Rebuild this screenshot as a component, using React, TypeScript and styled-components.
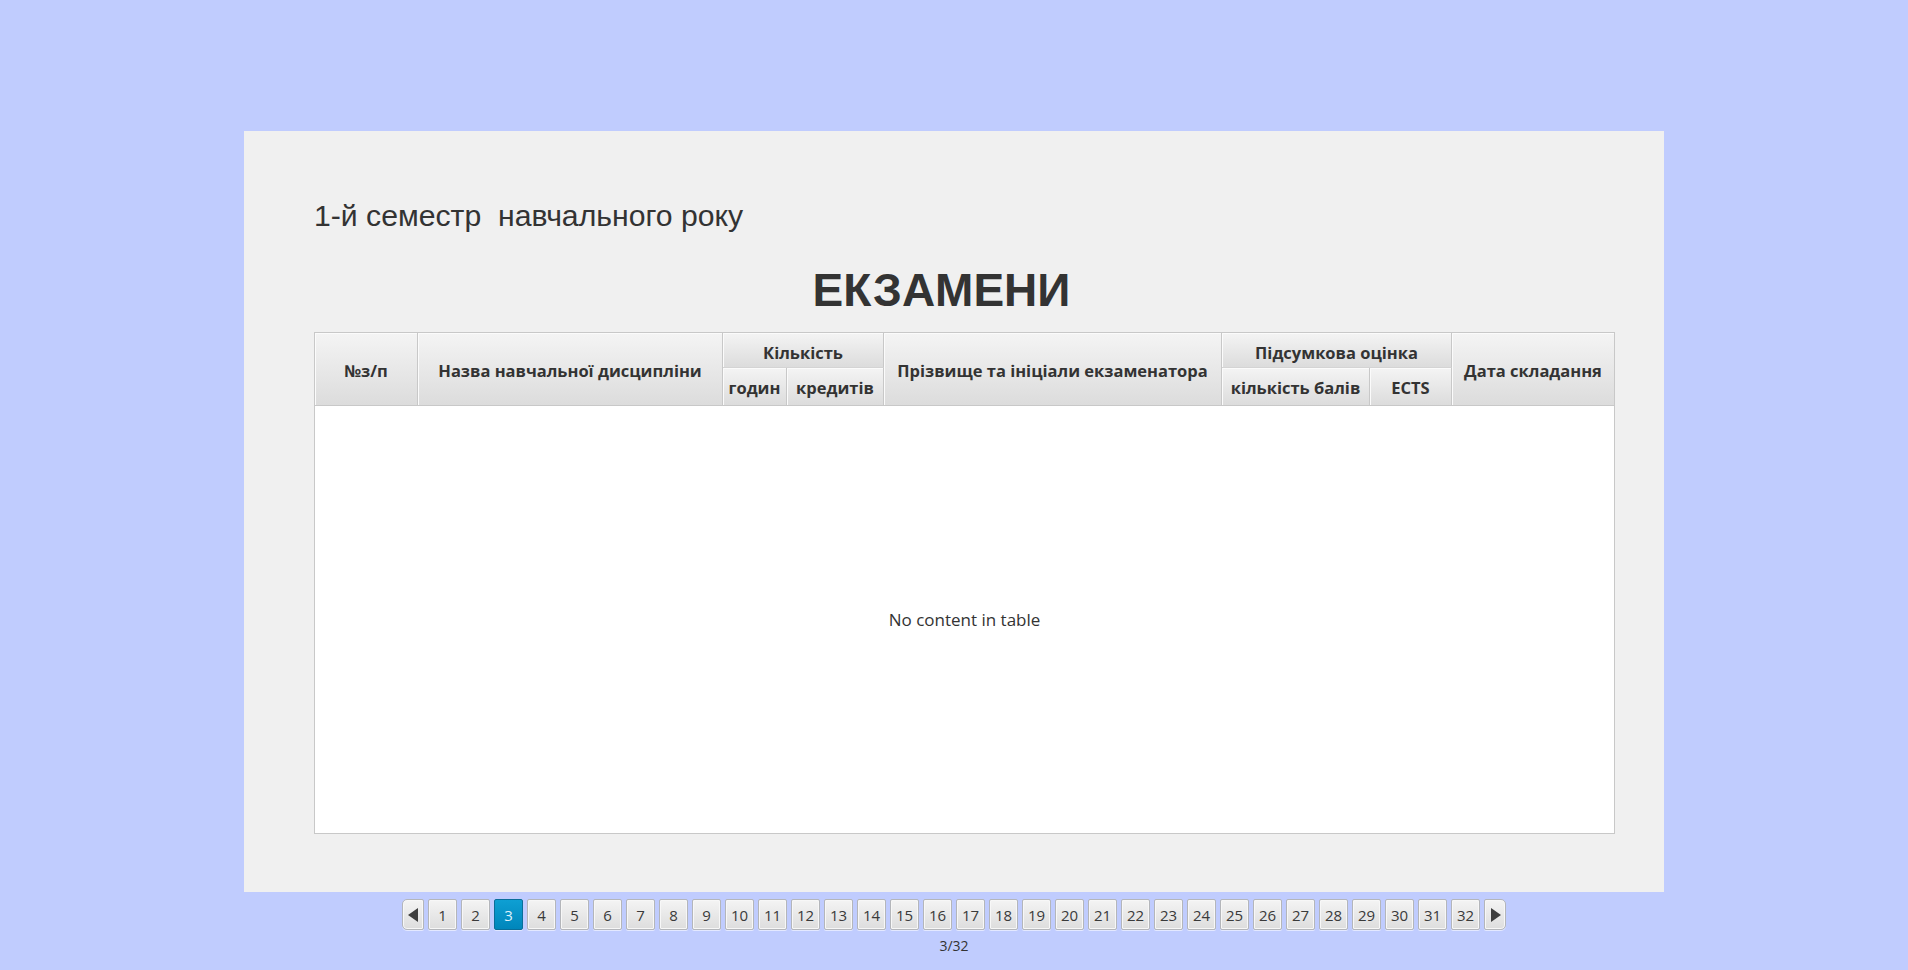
import React from "react";
import styled, { createGlobalStyle } from "styled-components";

const Global = createGlobalStyle`
  html, body { margin: 0; padding: 0; }
  body {
    background: #c0ccfe;
    font-family: "Open Sans", "Noto Sans", sans-serif;
    color: #333;
  }
`;

const Page = styled.div`
  width: 1908px;
  min-height: 970px;
  padding-top: 131px;
  box-sizing: border-box;
  display: flex;
  flex-direction: column;
  align-items: center;
`;

const Panel = styled.section`
  width: 1420px;
  box-sizing: border-box;
  background: #f0f0f0;
  padding: 70px 49px 58px 70px;
  display: flex;
  flex-direction: column;
`;

const Subtitle = styled.div`
  font-family: "Liberation Sans", Arial, sans-serif;
  font-size: 30.2px;
  line-height: 30px;
  color: #333;
  white-space: pre;
`;

const Title = styled.h1`
  margin: 36px 0 19px;
  padding-right: 46px;
  font-family: "Liberation Sans", Arial, sans-serif;
  font-weight: 700;
  font-size: 46px;
  line-height: 46px;
  text-align: center;
  color: #333;
`;

const Table = styled.div`
  border: 1px solid #c8c8c8;
  background: #fff;
  display: flex;
  flex-direction: column;
`;

const Header = styled.div`
  display: grid;
  grid-template-columns: 103px 305px 64px 97px 338px 148px 82px 162px;
  grid-template-rows: 35px 37px;
  border-bottom: 1px solid #c8c8c8;
`;

const HeadCell = styled.div<{ $col: string; $row: string; $last?: boolean }>`
  grid-column: ${(p) => p.$col};
  grid-row: ${(p) => p.$row};
  display: flex;
  align-items: center;
  justify-content: center;
  padding-top: ${(p) => (p.$row === "1" ? "4px" : "2px")};
  background: linear-gradient(#f4f4f4, #dcdcdc);
  box-shadow: inset 1px 1px 0 #fbfbfb;
  border-right: ${(p) => (p.$last ? "none" : "1px solid #c8c8c8")};
  border-bottom: ${(p) => (p.$row === "1" ? "1px solid #d4d4d4" : "none")};
  font-weight: 700;
  font-size: 16.5px;
  color: #333;
  white-space: nowrap;
  box-sizing: border-box;
`;

const Body = styled.div`
  height: 427px;
  display: flex;
  align-items: center;
  justify-content: center;
  font-size: 17px;
  color: #333;
`;

const Pager = styled.div`
  margin-top: 7px;
  display: flex;
  flex-direction: column;
  align-items: center;
`;

const PagerRow = styled.div`
  display: flex;
  gap: 4px;
`;

const PageButton = styled.button<{ $active?: boolean }>`
  width: 29px;
  height: 31px;
  padding: 0;
  box-sizing: border-box;
  border: 1px solid ${(p) => (p.$active ? "#0a6e9a" : "#b4b6ba")};
  border-radius: 2px;
  background: ${(p) =>
    p.$active
      ? "linear-gradient(#0e9fd3, #0086bb)"
      : "linear-gradient(#f4f4f4, #dddddd)"};
  box-shadow: ${(p) =>
    p.$active
      ? "0 1px 0 rgba(255,255,255,0.5)"
      : "inset 0 0 0 1px #f7f7f7, 0 1px 0 rgba(255,255,255,0.55)"};
  font-family: "Open Sans", "Noto Sans", sans-serif;
  font-size: 15px;
  color: ${(p) => (p.$active ? "#dff1fb" : "#3a3a3a")};
  display: flex;
  align-items: center;
  justify-content: center;
`;

const ArrowButton = styled.button<{ $side: "left" | "right" }>`
  width: 22px;
  height: 31px;
  padding: 0;
  box-sizing: border-box;
  border: 1px solid #b4b6ba;
  border-radius: ${(p) => (p.$side === "left" ? "5px 2px 2px 5px" : "2px 5px 5px 2px")};
  background: linear-gradient(#f4f4f4, #dddddd);
  box-shadow: inset 0 0 0 1px #f7f7f7, 0 1px 0 rgba(255,255,255,0.55);
  display: flex;
  align-items: center;
  justify-content: center;
`;

const PageInfo = styled.div`
  margin-top: 7px;
  font-size: 14px;
  line-height: 18px;
  color: #333;
`;

const Arrow = ({ dir }: { dir: "left" | "right" }) => (
  <svg width="11" height="14" viewBox="0 0 11 14">
    {dir === "left" ? (
      <polygon points="10,0 10,14 0,7" fill="#3d3d3d" />
    ) : (
      <polygon points="1,0 1,14 11,7" fill="#3d3d3d" />
    )}
  </svg>
);

export default function App() {
  const pages = Array.from({ length: 32 }, (_, i) => i + 1);
  return (
    <>
      <Global />
      <Page>
        <Panel>
          <Subtitle>{"1-й семестр  навчального року"}</Subtitle>
          <Title>ЕКЗАМЕНИ</Title>
          <Table>
            <Header>
              <HeadCell $col="1" $row="1 / 3">№з/п</HeadCell>
              <HeadCell $col="2" $row="1 / 3">Назва навчальної дисципліни</HeadCell>
              <HeadCell $col="3 / 5" $row="1">Кількість</HeadCell>
              <HeadCell $col="3" $row="2">годин</HeadCell>
              <HeadCell $col="4" $row="2">кредитів</HeadCell>
              <HeadCell $col="5" $row="1 / 3">Прізвище та ініціали екзаменатора</HeadCell>
              <HeadCell $col="6 / 8" $row="1">Підсумкова оцінка</HeadCell>
              <HeadCell $col="6" $row="2">кількість балів</HeadCell>
              <HeadCell $col="7" $row="2">ECTS</HeadCell>
              <HeadCell $col="8" $row="1 / 3" $last>Дата складання</HeadCell>
            </Header>
            <Body>No content in table</Body>
          </Table>
        </Panel>
        <Pager>
          <PagerRow>
            <ArrowButton $side="left"><Arrow dir="left" /></ArrowButton>
            {pages.map((n) => (
              <PageButton key={n} $active={n === 3}>{n}</PageButton>
            ))}
            <ArrowButton $side="right"><Arrow dir="right" /></ArrowButton>
          </PagerRow>
          <PageInfo>3/32</PageInfo>
        </Pager>
      </Page>
    </>
  );
}
